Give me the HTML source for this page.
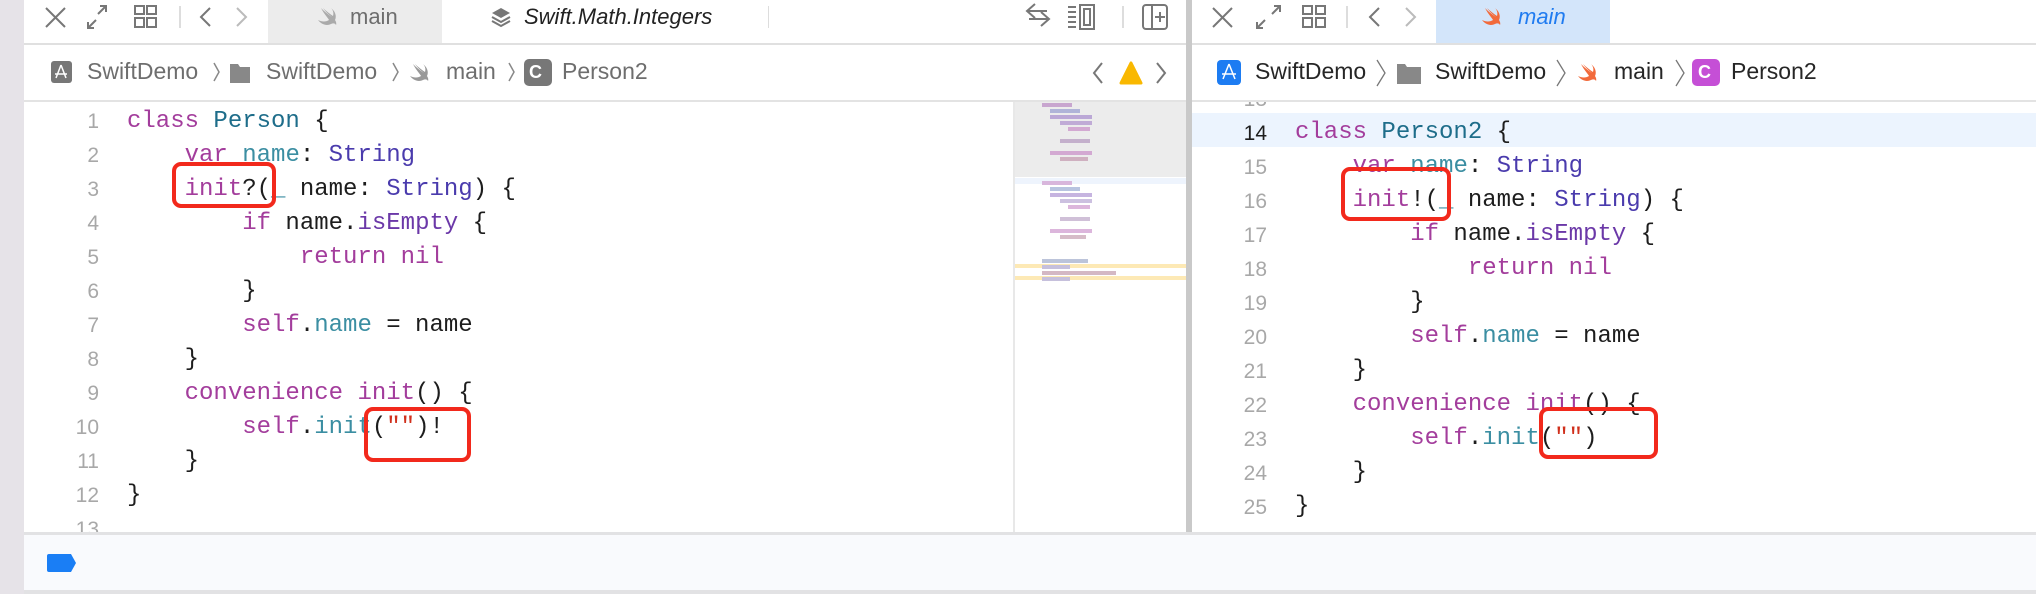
<!DOCTYPE html>
<html><head><meta charset="utf-8"><style>
*{margin:0;padding:0;box-sizing:border-box}
body{width:2036px;height:594px;overflow:hidden;background:#fff;position:relative;font-family:"Liberation Sans",sans-serif}
.a{position:absolute}
.ui{font-size:21px;color:#262626;white-space:nowrap;line-height:24px}
.bc{font-size:23px}
.g{color:#6e6e6e}
.code{font-family:"Liberation Mono",monospace;font-size:24px;white-space:pre;line-height:34px;color:#1d1d1d}
.ln{font-family:"Liberation Sans",sans-serif;font-size:21px;color:#a8a8a8;text-align:right;width:60px;line-height:34px}
.k{color:#a33d9c}.t{color:#4a3bad}.c{color:#1e6d8a}.p{color:#3b8ea2}.m{color:#6b38a8}.s{color:#d0301c}
.box{position:absolute;border:4px solid #f2291c;border-radius:9px}
.mm{position:absolute;height:4px}
</style></head><body>
<div class="a" style="left:0;top:0;width:24px;height:594px;background:#e6e3e8"></div>
<div class="a" style="left:24px;top:43px;width:2012px;height:2px;background:#e0e0e0"></div>
<div class="a" style="left:268px;top:0;width:174px;height:43px;background:#ececec"></div>
<div class="a" style="left:1436px;top:0;width:174px;height:43px;background:#d3e5fa"></div>
<div class="a" style="left:24px;top:100px;width:2012px;height:2px;background:#e3e3e3"></div>
<div class="a" style="left:1186px;top:0;width:6px;height:534px;background:#c9c9c9"></div>

<svg class="a" style="left:0;top:0" width="2036" height="100" fill="none" stroke="#777" stroke-width="2">
<path d="M46 8l19 19M65 8L46 27"/>
<path d="M88 28l8-8M88 22v6h6M106 6l-8 8M100 6h6v6"/>
<rect x="135" y="6" width="9" height="8"/><rect x="147" y="6" width="9" height="8"/><rect x="135" y="18" width="9" height="9"/><rect x="147" y="18" width="9" height="9"/>
<path d="M180 6v22" stroke="#ddd"/>
<path d="M210 8l-9 9 9 9"/><path d="M237 8l9 9-9 9" stroke="#bbb"/>
<path d="M1090 9l-8 7 8 7M1082 16h20M1096 17l8 7-8 7M1104 24h-20" transform="translate(-55,-5)"/>
<path d="M1068 7h8M1068 12h8M1068 17h8M1068 22h8M1068 27h8"/><rect x="1080" y="5" width="14" height="24"/><rect x="1084" y="9" width="6" height="16"/>
<path d="M1123 6v22" stroke="#ddd"/>
<rect x="1143" y="5" width="24" height="24" rx="3"/><path d="M1152 5v24M1160 12v10M1155 17h10"/>
<path d="M1213 8l19 19M1232 8l-19 19"/>
<path d="M1257 28l8-8M1257 22v6h6M1280 6l-8 8M1274 6h6v6"/>
<rect x="1303" y="6" width="9" height="8"/><rect x="1316" y="6" width="9" height="8"/><rect x="1303" y="18" width="9" height="9"/><rect x="1316" y="18" width="9" height="9"/>
<path d="M1347 6v22" stroke="#ddd"/>
<path d="M1379 8l-9 9 9 9"/><path d="M1406 8l9 9-9 9" stroke="#bbb"/>
<rect x="51" y="61" width="21" height="22" rx="3" fill="#777" stroke="none"/><path d="M61 65l-5 13M61 65l5 13M55 74h12" stroke="#fff" stroke-width="1.5"/>
<path d="M230 64h8l2 3h10v16h-20z" fill="#888" stroke="none"/>
<path d="M393 63l5 9-5 9M214 63l5 9-5 9M509 63l5 9-5 9" stroke="#888" stroke-width="1.5"/>
<rect x="524" y="59" width="28" height="27" rx="5" fill="#777" stroke="none"/>
<path d="M1102 63l-8 10 8 10M1157 63l8 10-8 10"/>
<path d="M1131 63l10 20h-20z" fill="#f9b800" stroke="#f9b800" stroke-linejoin="round" stroke-width="3"/>
<rect x="1217" y="60" width="24" height="25" rx="4" fill="#1d7cf2" stroke="none"/><path d="M1229 64l-6 15M1229 64l6 15M1222 74h14" stroke="#fff" stroke-width="1.5"/>
<path d="M1397 64h8l2 3h14v17h-24z" fill="#888" stroke="none"/>
<path d="M1377 60l8 13-8 13M1557 60l8 13-8 13M1676 60l8 13-8 13" stroke="#777" stroke-width="1.3"/>
<rect x="1692" y="59" width="28" height="27" rx="5" fill="#c54fd6" stroke="none"/>
</svg>
<svg class="a" style="left:318px;top:6px" width="20" height="22" viewBox="0 0 20 22"><path d="M3 2c4 4 8 7 11 9-4-3-7-6-9-9 3 3 7 6 10 8 1-3 0-6-2-8 4 3 6 8 4 12 2 3 1 5 1 5-1-2-3-2-5-1-4 2-9 1-13-4 4 2 8 2 11 0C10 12 6 8 3 2z" fill="#aaa"/></svg>
<svg class="a" style="left:409px;top:62px" width="22" height="22" viewBox="0 0 20 22"><path d="M3 2c4 4 8 7 11 9-4-3-7-6-9-9 3 3 7 6 10 8 1-3 0-6-2-8 4 3 6 8 4 12 2 3 1 5 1 5-1-2-3-2-5-1-4 2-9 1-13-4 4 2 8 2 11 0C10 12 6 8 3 2z" fill="#999"/></svg>
<svg class="a" style="left:1482px;top:6px" width="20" height="22" viewBox="0 0 20 22"><path d="M3 2c4 4 8 7 11 9-4-3-7-6-9-9 3 3 7 6 10 8 1-3 0-6-2-8 4 3 6 8 4 12 2 3 1 5 1 5-1-2-3-2-5-1-4 2-9 1-13-4 4 2 8 2 11 0C10 12 6 8 3 2z" fill="#f26a3b"/></svg>
<svg class="a" style="left:1577px;top:62px" width="22" height="22" viewBox="0 0 20 22"><path d="M3 2c4 4 8 7 11 9-4-3-7-6-9-9 3 3 7 6 10 8 1-3 0-6-2-8 4 3 6 8 4 12 2 3 1 5 1 5-1-2-3-2-5-1-4 2-9 1-13-4 4 2 8 2 11 0C10 12 6 8 3 2z" fill="#f26a3b"/></svg>
<svg class="a" style="left:490px;top:6px" width="22" height="24" viewBox="0 0 22 24"><path d="M11 2l9 5-9 5-9-5z" fill="#777"/><path d="M2 11l9 5 9-5M2 15l9 5 9-5" stroke="#777" stroke-width="2" fill="none"/></svg>

<div class="a ui g" style="left:350px;top:5px;font-size:22px">main</div>
<div class="a ui" style="left:524px;top:5px;font-size:22px;font-style:italic;color:#222">Swift.Math.Integers</div>
<div class="a" style="left:768px;top:6px;width:1px;height:22px;background:#ddd"></div>
<div class="a ui" style="left:1518px;top:5px;font-size:22px;font-style:italic;color:#1f7bf0">main</div>

<div class="a ui bc g" style="left:87px;top:59px">SwiftDemo</div>
<div class="a ui bc g" style="left:266px;top:59px">SwiftDemo</div>
<div class="a ui bc g" style="left:446px;top:59px">main</div>
<div class="a ui" style="left:529px;top:60px;color:#fff;font-weight:bold;font-size:18px">C</div>
<div class="a ui bc g" style="left:562px;top:59px">Person2</div>
<div class="a ui bc" style="left:1255px;top:59px">SwiftDemo</div>
<div class="a ui bc" style="left:1435px;top:59px">SwiftDemo</div>
<div class="a ui bc" style="left:1614px;top:59px">main</div>
<div class="a ui" style="left:1698px;top:60px;color:#fff;font-weight:bold;font-size:18px">C</div>
<div class="a ui bc" style="left:1731px;top:59px">Person2</div>

<div class="a" style="left:1013px;top:102px;width:2px;height:432px;background:#e8e8e8"></div>
<div class="a" style="left:1015px;top:102px;width:171px;height:75px;background:#ececec"></div>
<div class="a" style="left:1015px;top:178px;width:171px;height:6px;background:#eef4fd"></div>
<div class="a" style="left:1015px;top:264px;width:171px;height:4px;background:#fde9b5"></div>
<div class="a" style="left:1015px;top:276px;width:171px;height:4px;background:#fde9b5"></div>
<div class="mm" style="left:1042px;top:103px;width:30px;background:#c8a6cf"></div>
<div class="mm" style="left:1050px;top:109px;width:30px;background:#b0b4d8"></div>
<div class="mm" style="left:1050px;top:115px;width:42px;background:#bba8d6"></div>
<div class="mm" style="left:1060px;top:121px;width:32px;background:#c0abd6"></div>
<div class="mm" style="left:1068px;top:127px;width:22px;background:#d3a9d2"></div>
<div class="mm" style="left:1060px;top:139px;width:30px;background:#c4b0cc"></div>
<div class="mm" style="left:1050px;top:151px;width:42px;background:#d3a9d2"></div>
<div class="mm" style="left:1060px;top:157px;width:28px;background:#cfb0c0"></div>
<div class="mm" style="left:1042px;top:181px;width:30px;background:#d8b6dc"></div>
<div class="mm" style="left:1050px;top:187px;width:30px;background:#b8c4e0"></div>
<div class="mm" style="left:1050px;top:193px;width:42px;background:#c6b4e0"></div>
<div class="mm" style="left:1060px;top:199px;width:32px;background:#ccc0e0"></div>
<div class="mm" style="left:1068px;top:205px;width:22px;background:#dcb6dc"></div>
<div class="mm" style="left:1060px;top:217px;width:30px;background:#d0c0d8"></div>
<div class="mm" style="left:1050px;top:229px;width:42px;background:#dcb6dc"></div>
<div class="mm" style="left:1060px;top:235px;width:26px;background:#d6bcc8"></div>
<div class="mm" style="left:1042px;top:259px;width:46px;background:#bcc4da"></div>
<div class="mm" style="left:1042px;top:265px;width:28px;background:#c6c0dc"></div>
<div class="mm" style="left:1042px;top:271px;width:74px;background:#d4b8c4"></div>
<div class="mm" style="left:1042px;top:277px;width:28px;background:#c6c0dc"></div>

<div class="a" style="left:1192px;top:113px;width:844px;height:34px;background:#ecf4fe"></div>

<div class="a" style="left:24px;top:102px;width:989px;height:432px;overflow:hidden">
<div class="a ln" style="left:15px;top:3px">1<br>2<br>3<br>4<br>5<br>6<br>7<br>8<br>9<br>10<br>11<br>12<br>13</div>
<div class="a code" style="left:103px;top:3px"><span class="k">class</span> <span class="c">Person</span> {
    <span class="k">var</span> <span class="p">name</span>: <span class="t">String</span>
    <span class="k">init</span>?(<span class="p">_</span> name: <span class="t">String</span>) {
        <span class="k">if</span> name.<span class="m">isEmpty</span> {
            <span class="k">return nil</span>
        }
        <span class="k">self</span>.<span class="p">name</span> = name
    }
    <span class="k">convenience init</span>() {
        <span class="k">self</span>.<span class="p">init</span>(<span class="s">""</span>)!
    }
}
</div></div>

<div class="a" style="left:1192px;top:102px;width:844px;height:432px;overflow:hidden">
<div class="a ln" style="left:15px;top:-19px;width:60px">13<br><span style="color:#1d1d1d">14</span><br>15<br>16<br>17<br>18<br>19<br>20<br>21<br>22<br>23<br>24<br>25<br>26</div>
<div class="a code" style="left:103px;top:14px"><span class="k">class</span> <span class="c">Person2</span> {
    <span class="k">var</span> <span class="p">name</span>: <span class="t">String</span>
    <span class="k">init</span>!(<span class="p">_</span> name: <span class="t">String</span>) {
        <span class="k">if</span> name.<span class="m">isEmpty</span> {
            <span class="k">return nil</span>
        }
        <span class="k">self</span>.<span class="p">name</span> = name
    }
    <span class="k">convenience init</span>() {
        <span class="k">self</span>.<span class="p">init</span>(<span class="s">""</span>)
    }
}
</div></div>

<div class="box" style="left:172px;top:162px;width:104px;height:46px"></div>
<div class="box" style="left:364px;top:407px;width:107px;height:55px"></div>
<div class="box" style="left:1341px;top:167px;width:110px;height:54px"></div>
<div class="box" style="left:1539px;top:407px;width:119px;height:52px"></div>

<div class="a" style="left:24px;top:532px;width:2012px;height:3px;background:#e2e2e4"></div>
<div class="a" style="left:24px;top:535px;width:2012px;height:55px;background:#f9fafd"></div>
<div class="a" style="left:24px;top:590px;width:2012px;height:4px;background:#e2e2e4"></div>
<svg class="a" style="left:46px;top:553px" width="32" height="20"><path d="M3 1h22l5 9-5 9H3a2 2 0 0 1-2-2V3a2 2 0 0 1 2-2z" fill="#1a7ef5"/></svg>
</body></html>
